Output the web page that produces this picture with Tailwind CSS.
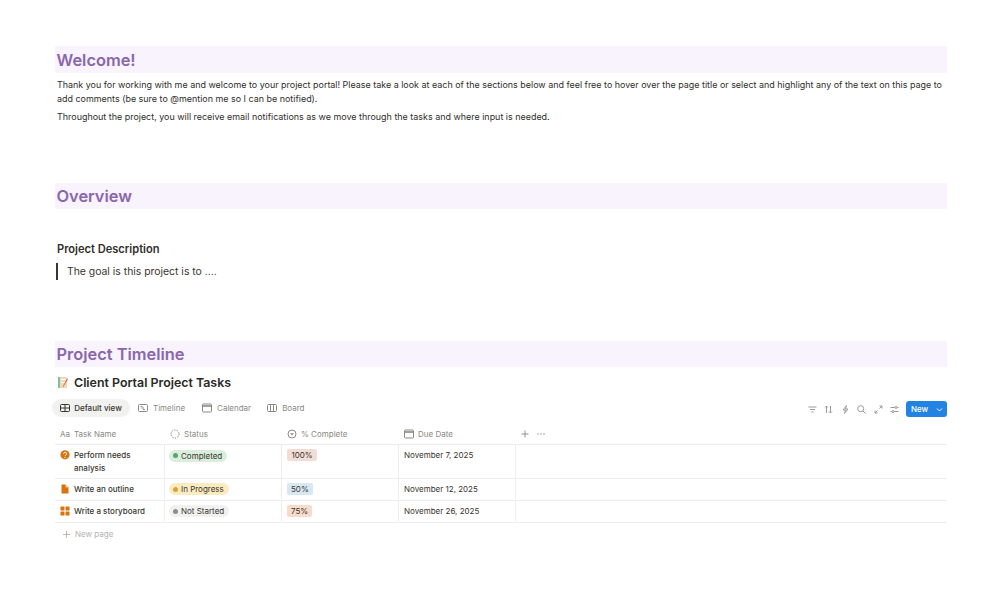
<!DOCTYPE html>
<html lang="en">
<head>
  <meta charset="UTF-8" />
  <title>Client Portal</title>
  <script src="https://cdn.jsdelivr.net/npm/@tailwindcss/browser@4"></script>
</head>
<body class="bg-white h-[592px] overflow-hidden font-['Inter',sans-serif] text-[#37352f]">
  <div class="w-[892px] ml-[55px] pt-[46px]">
    <!-- Welcome -->
    <h1 class="h-[27px] bg-[#f8f3fc] pl-[1.5px] pt-[1px] text-[16.4px] leading-[27px] font-semibold text-[#8a67ab]">Welcome!</h1>
    <p class="mt-[5px] pl-[2px] text-[8.95px] leading-[14px] text-[#2f2e2a]">Thank you for working with me and welcome to your project portal! Please take a look at each of the sections below and feel free to hover over the page title or select and highlight any of the text on this page to add comments (be sure to @mention me so I can be notified).</p>
    <p class="mt-[4px] pl-[2px] text-[8.95px] leading-[14px] text-[#2f2e2a]">Throughout the project, you will receive email notifications as we move through the tasks and where input is needed.</p>

    <!-- Overview -->
    <h1 class="mt-[59px] h-[26px] bg-[#f8f3fc] pl-[1.5px] text-[16.4px] leading-[26px] font-semibold text-[#8a67ab]">Overview</h1>
    <h3 class="mt-[32px] pl-[2px] text-[11.1px] leading-[16px] font-semibold text-[#2f2e2a]">Project Description</h3>
    <div class="mt-[6px] ml-[1px] border-l-2 border-[#37352f] pl-[9px] h-[17px] text-[10.4px] leading-[17px] text-[#37352f]">The goal is this project is to ....</div>

    <!-- Timeline -->
    <h1 class="mt-[61px] h-[26px] bg-[#f8f3fc] pl-[1.5px] text-[16.4px] leading-[26px] font-semibold text-[#8a67ab]">Project Timeline</h1>

    <div class="mt-[7px] pl-[2px] flex items-center gap-[5px] h-[17px]">
      <svg class="w-[12px] h-[13px]" viewBox="0 0 12 13">
        <rect x="1" y="1" width="9" height="11" rx="1" fill="#f3d9b1"/>
        <rect x="1" y="1" width="2" height="11" fill="#7fbfa8"/>
        <rect x="4" y="3" width="5" height="1" fill="#fff"/>
        <rect x="4" y="6" width="5" height="1" fill="#fff"/>
        <path d="M11 3 L6.5 10.5 L5.5 11.5 L6 10 L10 2.5 Z" fill="#d9583f"/>
      </svg>
      <h2 class="text-[12.4px] leading-[17px] font-semibold text-[#2a2925]">Client Portal Project Tasks</h2>
    </div>

    <!-- Views + toolbar -->
    <div class="mt-[8px] h-[18px] flex items-center justify-between">
      <div class="flex items-center text-[8px] text-[#8a8984] -ml-[3px]">
        <div class="h-[18px] w-[78px] flex items-center justify-center gap-[4px] rounded-full bg-[#f1f1ef] text-[#37352f] font-medium">
          <svg class="w-[10px] h-[10px]" viewBox="0 0 10 10" fill="none" stroke="#37352f" stroke-width="1"><rect x="0.5" y="1.5" width="9" height="7" rx="1"/><path d="M0.5 5h9M5 1.5v7"/></svg>
          Default view
        </div>
        <div class="h-[18px] ml-[8px] flex items-center gap-[5px]">
          <svg class="w-[10px] h-[10px]" viewBox="0 0 10 10" fill="none" stroke="#8a8984" stroke-width="1"><rect x="0.5" y="1.5" width="9" height="7" rx="1"/><path d="M2.5 3.5h2M3.5 5h2.5M5 6.5h2"/></svg>
          Timeline
        </div>
        <div class="h-[18px] ml-[17px] flex items-center gap-[5px]">
          <svg class="w-[10px] h-[10px]" viewBox="0 0 10 10" fill="none" stroke="#8a8984" stroke-width="1"><rect x="0.5" y="1" width="9" height="8" rx="1"/><path d="M0.5 3h9" stroke-width="1.6"/></svg>
          Calendar
        </div>
        <div class="h-[18px] ml-[16px] flex items-center gap-[5px]">
          <svg class="w-[10px] h-[10px]" viewBox="0 0 10 10" fill="none" stroke="#8a8984" stroke-width="1"><rect x="0.5" y="1.5" width="9" height="7" rx="1"/><path d="M3.5 1.5v7M6.5 1.5v7"/></svg>
          Board
        </div>
      </div>
      <div class="flex items-center mt-[2px]">
        <div class="flex items-center gap-[7.5px] mr-[7px]">
          <svg class="w-[9px] h-[9px]" viewBox="0 0 9 9" fill="none" stroke="#9b9a97" stroke-width="1"><path d="M0.5 2h8M2 4.5h5M3.5 7h2"/></svg>
          <svg class="w-[9px] h-[9px]" viewBox="0 0 9 9" fill="none" stroke="#9b9a97" stroke-width="1"><path d="M2.5 8V1M1 2.5 2.5 1 4 2.5M6.5 1v7M5 6.5 6.5 8 8 6.5"/></svg>
          <svg class="w-[9px] h-[9px]" viewBox="0 0 9 9" fill="none" stroke="#9b9a97" stroke-width="1"><path d="M5.5 0.5 2 5h2.5L3.5 8.5 7 4H4.5Z"/></svg>
          <svg class="w-[9px] h-[9px]" viewBox="0 0 9 9" fill="none" stroke="#9b9a97" stroke-width="1"><circle cx="3.7" cy="3.7" r="3"/><path d="M6 6l2.5 2.5"/></svg>
          <svg class="w-[9px] h-[9px]" viewBox="0 0 9 9" fill="none" stroke="#9b9a97" stroke-width="1"><path d="M5.5 3.5 8 1M5.5 1H8v2.5M3.5 5.5 1 8M1 5.5V8h2.5"/></svg>
          <svg class="w-[9px] h-[9px]" viewBox="0 0 9 9" fill="none" stroke="#9b9a97" stroke-width="1"><path d="M0.5 2.5h8M0.5 6.5h8"/><circle cx="6" cy="2.5" r="1" fill="#fff"/><circle cx="3" cy="6.5" r="1" fill="#fff"/></svg>
        </div>
        <div class="h-[16px] w-[41px] rounded-[3px] bg-[#2383e2] flex items-center text-white text-[8px] font-medium">
          <span class="ml-[5px] w-[23px]">New</span>
          <svg class="w-[7px] h-[7px] ml-[2px]" viewBox="0 0 7 7" fill="none" stroke="#fff" stroke-width="1"><path d="M1 2.5 3.5 5 6 2.5"/></svg>
        </div>
      </div>
    </div>

    <!-- Table -->
    <div class="mt-[10px] text-[8px]">
      <div class="grid grid-cols-[110px_117px_117px_117px_1fr] h-[18px] pb-[3px] items-center text-[#8a8984] border-b border-[#ededec]">
        <div class="flex items-center pl-[5px] gap-[4px]"><span class="w-[10px] text-[8px] leading-none">Aa</span>Task Name</div>
        <div class="flex items-center pl-[5px] gap-[4px]">
          <svg class="w-[10px] h-[10px]" viewBox="0 0 10 10" fill="none" stroke="#8a8984" stroke-width="1" stroke-dasharray="1.4 1.1"><circle cx="5" cy="5" r="4"/></svg>
          Status
        </div>
        <div class="flex items-center pl-[5px] gap-[4px]">
          <svg class="w-[10px] h-[10px]" viewBox="0 0 10 10" fill="none" stroke="#8a8984" stroke-width="1"><circle cx="5" cy="5" r="4"/><path d="M3 4.2h4L5 6.6Z" fill="#8a8984" stroke="none"/></svg>
          % Complete
        </div>
        <div class="flex items-center pl-[5px] gap-[4px]">
          <svg class="w-[10px] h-[10px]" viewBox="0 0 10 10" fill="none" stroke="#8a8984" stroke-width="1"><rect x="0.5" y="1" width="9" height="8" rx="1"/><path d="M0.5 3h9" stroke-width="1.6"/></svg>
          Due Date
        </div>
        <div class="flex items-center pl-[5px] gap-[8px]">
          <svg class="w-[8px] h-[8px]" viewBox="0 0 8 8" fill="none" stroke="#8a8984" stroke-width="0.9"><path d="M4 0.5v7M0.5 4h7"/></svg>
          <svg class="w-[8px] h-[8px]" viewBox="0 0 8 8" fill="#8a8984"><circle cx="1" cy="4" r="0.7"/><circle cx="4" cy="4" r="0.7"/><circle cx="7" cy="4" r="0.7"/></svg>
        </div>
      </div>

      <div class="grid grid-cols-[110px_117px_117px_117px_1fr] h-[34px] border-b border-[#ededec] text-[#37352f]">
        <div class="flex items-start pl-[5px] pt-[4px] gap-[4px] border-r border-[#ededec] font-medium">
          <svg class="w-[10px] h-[10px] shrink-0 mt-[1px]" viewBox="0 0 10 10"><circle cx="5" cy="4.8" r="4.6" fill="#d9730d"/><path d="M3.6 3.8a1.5 1.5 0 1 1 2.2 1.3C5.2 5.4 5 5.7 5 6.2" fill="none" stroke="#fff" stroke-width="1"/><circle cx="5" cy="7.6" r="0.6" fill="#fff"/></svg>
          <span class="leading-[12.5px] w-[80px]">Perform needs analysis</span>
        </div>
        <div class="pl-[4px] pt-[4px] border-r border-[#ededec]">
          <span class="inline-flex items-center h-[12px] pl-[4px] pr-[5px] gap-[3px] rounded-full bg-[#dbeddb] leading-none"><i class="w-[5px] h-[5px] rounded-full bg-[#4fa676]"></i>Completed</span>
        </div>
        <div class="pl-[5px] pt-[4px] border-r border-[#ededec]">
          <span class="inline-block h-[12px] px-[4.5px] rounded-[2px] bg-[#f2ddd6] leading-[12px]">100%</span>
        </div>
        <div class="pl-[5px] pt-[4px] border-r border-[#ededec] leading-[13px]">November 7, 2025</div>
        <div></div>
      </div>

      <div class="grid grid-cols-[110px_117px_117px_117px_1fr] h-[22px] pb-[1px] border-b border-[#ededec] text-[#37352f]">
        <div class="flex items-center pl-[5px] gap-[4px] border-r border-[#ededec] font-medium">
          <svg class="w-[10px] h-[10px] shrink-0" viewBox="0 0 10 10"><path d="M1.5 0.5h4l3 3v6h-7Z" fill="#d9730d"/><path d="M5.5 0.5v3h3" fill="#fff" opacity="0.6"/></svg>
          Write an outline
        </div>
        <div class="flex items-center pl-[4px] border-r border-[#ededec]">
          <span class="inline-flex items-center h-[12px] pl-[4px] pr-[5px] gap-[3px] rounded-full bg-[#fbecc0] leading-none"><i class="w-[5px] h-[5px] rounded-full bg-[#d9a13f]"></i>In Progress</span>
        </div>
        <div class="flex items-center pl-[5px] border-r border-[#ededec]">
          <span class="inline-block h-[12px] px-[4px] rounded-[2px] bg-[#d8e8f3] leading-[12px]">50%</span>
        </div>
        <div class="flex items-center pl-[5px] border-r border-[#ededec]">November 12, 2025</div>
        <div></div>
      </div>

      <div class="grid grid-cols-[110px_117px_117px_117px_1fr] h-[22px] pb-[1px] border-b border-[#ededec] text-[#37352f]">
        <div class="flex items-center pl-[5px] gap-[4px] border-r border-[#ededec] font-medium">
          <svg class="w-[10px] h-[10px] shrink-0" viewBox="0 0 10 10" fill="#d9730d"><rect x="0.5" y="0.5" width="4" height="4" rx="0.5"/><rect x="5.5" y="0.5" width="4" height="4" rx="0.5"/><rect x="0.5" y="5.5" width="4" height="4" rx="0.5"/><rect x="5.5" y="5.5" width="4" height="4" rx="0.5"/></svg>
          Write a storyboard
        </div>
        <div class="flex items-center pl-[4px] border-r border-[#ededec]">
          <span class="inline-flex items-center h-[12px] pl-[4px] pr-[5px] gap-[3px] rounded-full bg-[#f1f1ef] leading-none"><i class="w-[5px] h-[5px] rounded-full bg-[#8f8e8a]"></i>Not Started</span>
        </div>
        <div class="flex items-center pl-[5px] border-r border-[#ededec]">
          <span class="inline-block h-[12px] px-[4px] rounded-[2px] bg-[#f8dccb] leading-[12px]">75%</span>
        </div>
        <div class="flex items-center pl-[5px] border-r border-[#ededec]">November 26, 2025</div>
        <div></div>
      </div>

      <div class="h-[22px] flex items-center pl-[8px] gap-[5px] text-[#b4b3af]">
        <svg class="w-[7px] h-[7px]" viewBox="0 0 7 7" fill="none" stroke="#b4b3af" stroke-width="0.9"><path d="M3.5 0v7M0 3.5h7"/></svg>
        New page
      </div>
    </div>
  </div>
</body>
</html>
